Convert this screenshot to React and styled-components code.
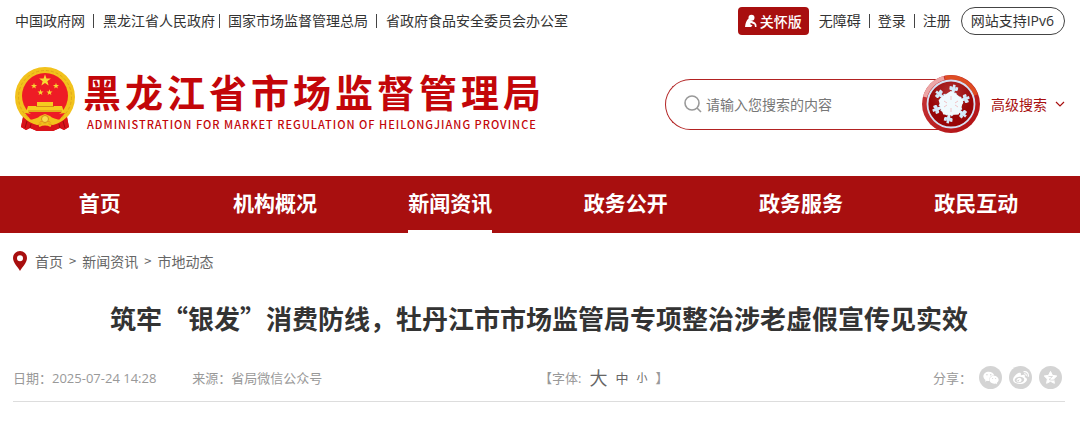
import React from "react";
import styled, { createGlobalStyle } from "styled-components";
import { FaWeixin, FaWeibo } from "react-icons/fa";

const RED = "#a80f0f";
const CJK = `"Noto Sans CJK SC", sans-serif`;
const MIXED = `"Open Sans", "Noto Sans CJK SC", sans-serif`;

const GlobalStyle = createGlobalStyle`
  * { box-sizing: border-box; }
  body { margin: 0; background: #fff; color: #333; font: 14px/20px ${CJK}; }
  a { color: inherit; text-decoration: none; }
  button { font: inherit; color: inherit; background: none; border: 0; padding: 0; cursor: pointer; }
  svg { display: block; flex: none; }
`;

const TopBar = styled.div`
  display: flex;
  justify-content: space-between;
  align-items: center;
  padding: 7px 15px 0;
`;
const LinkRow = styled.nav`
  display: flex;
  align-items: center;
  padding-bottom: 2px;
  white-space: nowrap;
`;
const Bar = styled.i`
  width: 1px;
  height: 14px;
  margin: 2px ${(p) => p.$after ?? 8}px 0 ${(p) => p.$before ?? 8}px;
  background: #444;
`;
const Tools = styled.div`
  display: flex;
  align-items: center;
  gap: 10px;
`;
const CareButton = styled.button`
  display: flex;
  align-items: center;
  justify-content: center;
  gap: 3px;
  height: 28px;
  padding: 0 7px 0 6px;
  border-radius: 4px;
  background: ${RED};
  color: #fff;
  font-weight: 500;
  line-height: 26px;
`;
const Ipv6 = styled.a`
  height: 28px;
  padding: 0 10px 0 9px;
  border: 1px solid #444;
  border-radius: 14px;
  font-family: ${MIXED};
  line-height: 26px;
  white-space: nowrap;
`;

const Header = styled.header`
  display: flex;
  justify-content: space-between;
  padding: 32px 15px 43px;
`;
const Brand = styled.a`
  display: flex;
  gap: 8px;
  color: #c30609;
  white-space: nowrap;
`;
const BrandText = styled.div`
  display: flex;
  flex-direction: column;
`;
const BrandName = styled.div`
  font-size: 38px;
  font-weight: 700;
  line-height: 48px;
  letter-spacing: 4px;
`;
const BrandEnglish = styled.div`
  padding-left: 4px;
  font-size: 11px;
  font-weight: 500;
  line-height: 18px;
  letter-spacing: 1px;
`;
const SearchArea = styled.div`
  display: flex;
  align-items: center;
  height: 58px;
  margin-top: 8px;
`;
const SearchForm = styled.form`
  display: flex;
  align-items: center;
`;
const SearchField = styled.label`
  display: flex;
  align-items: center;
  gap: 3px;
  width: 286px;
  height: 51px;
  padding-left: 17px;
  border: 1px solid #b22222;
  border-right: 0;
  border-radius: 26px 0 0 26px;
  color: #999;
`;
const SearchInput = styled.input`
  width: 200px;
  border: 0;
  outline: 0;
  padding: 0;
  background: none;
  font: inherit;
  color: #333;
  &::placeholder { color: #777; opacity: 1; }
`;
const SearchButton = styled.button`
  margin-left: -29px;
`;
const Advanced = styled.a`
  display: flex;
  align-items: center;
  gap: 8px;
  margin-left: 11px;
  color: ${RED};
  white-space: nowrap;
`;

const MainNav = styled.nav`
  display: grid;
  grid-template-columns: repeat(6, 1fr);
  justify-items: center;
  height: 57px;
  padding: 0 16px 0 12px;
  background: ${RED};
`;
const NavItem = styled.a`
  padding-bottom: 2px;
  border-bottom: 3px solid ${(p) => (p.$active ? "#fff" : "transparent")};
  color: #fff;
  font-size: 21px;
  font-weight: 700;
  line-height: 52px;
`;

const Page = styled.main`
  padding: 0 15px 0 13px;
`;
const Crumbs = styled.nav`
  display: flex;
  align-items: center;
  gap: 6px;
  padding-top: 17px;
  color: #666;
  line-height: 22px;
`;
const Arrow = styled.span`
  font-size: 13px;
`;
const PinBox = styled.span`
  padding-right: 2px;
`;
const Title = styled.h1`
  margin: 26px 0 0;
  color: #333;
  font-size: 26px;
  font-weight: 700;
  line-height: 40px;
  text-align: center;
`;
const Meta = styled.div`
  display: flex;
  align-items: center;
  height: 48px;
  margin-top: 16px;
  border-bottom: 1px solid #ddd;
  color: #999;
  font-family: ${MIXED};
  font-size: 13px;
`;
const Source = styled.div`
  display: flex;
  flex: 0 0 50%;
  gap: 36px;
`;
const SizePicker = styled.div`
  display: flex;
  align-items: center;
  gap: 8px;
`;
const SizeButton = styled.button`
  color: #666;
  font-size: ${(p) => p.$size}px;
`;
const Share = styled.div`
  display: flex;
  align-items: center;
  gap: 7px;
  margin-left: auto;
  padding-right: 3px;
`;
const ShareButton = styled.button`
  display: flex;
  align-items: center;
  justify-content: center;
  width: 23px;
  height: 23px;
  border-radius: 50%;
  background: #d4d4d4;
  color: #fff;
`;

const starPoints = (cx, cy, r, inner = 0.4) =>
  Array.from({ length: 10 }, (_, i) => {
    const a = (Math.PI / 5) * i - Math.PI / 2;
    const d = i % 2 ? r * inner : r;
    return `${cx + d * Math.cos(a)},${cy + d * Math.sin(a)}`;
  }).join(" ");

function Emblem() {
  return (
    <svg width="60" height="64" viewBox="0 0 60 64" aria-hidden="true">
      <path d="M9 45 6 60l5 3 4-2 7 3h16l7-3 4 2 5-3-3-15z" fill="#d9141a" />
      <circle cx="30" cy="30" r="30" fill="#f2c21c" />
      <circle cx="30" cy="30" r="26.5" fill="none" stroke="#dfa51a" strokeWidth="1" strokeDasharray="3 2" />
      <circle cx="30" cy="29" r="23" fill="#ee1c25" />
      <path d="M22 35h16v4h9l2 6H11l2-6h9z" fill="#f5cb1f" />
      <path d="M21 39.500h18M13 44h34" stroke="#d48e16" />
      <path d="M10 46q20 4 40 0l-6 7q-14 3-28 0z" fill="#ee1c25" />
      <g fill="#f8d832">
        <polygon points={starPoints(30, 13.5, 6.2)} />
        <polygon points={starPoints(19, 19, 3.2)} />
        <polygon points={starPoints(41, 19, 3.2)} />
        <polygon points={starPoints(25.5, 25.5, 3.2)} />
        <polygon points={starPoints(34.5, 25.5, 3.2)} />
      </g>
      <path d="M13 53q9-1 12-4l5-2 5 2q3 3 12 4l-4 4q-6 0-9-3l-4 2-4-2q-3 3-9 3z" fill="#f2c21c" />
      <circle cx="30" cy="52" r="3.5" fill="#f8dc4b" stroke="#d48e16" />
      <path d="M8 50q6 6 14 8l8-1 8 1q8-2 14-8l2 10-5 3-4-2-7 3H22l-7-3-4 2-5-3z" fill="#d9141a" />
      <path d="M24 59q6-3 12 0" stroke="#f2c21c" strokeWidth="2" fill="none" />
      <path d="M12 54l-2 7M16 57l-1 4M48 54l2 7M44 57l1 4" stroke="#9d0d10" fill="none" />
    </svg>
  );
}

function Snowflake() {
  return (
    <svg width="58" height="58" viewBox="0 0 58 58" aria-hidden="true">
      <defs>
        <linearGradient id="rim" x1="0" y1="0" x2="1" y2="1">
          <stop offset="0" stopColor="#c93a3c" />
          <stop offset="1" stopColor="#b00d10" />
        </linearGradient>
        <radialGradient id="disc" cx=".5" cy=".25" r=".8">
          <stop offset="0" stopColor="#b03030" />
          <stop offset=".6" stopColor="#980608" />
        </radialGradient>
      </defs>
      <circle cx="29" cy="29" r="29" fill="url(#rim)" />
      <path d="M3 22A27 27 0 0 1 22 3" stroke="#eda6a6" strokeWidth="4" fill="none" />
      <path d="M23 3A27 27 0 0 1 54 20" stroke="#de4d22" strokeWidth="4" fill="none" />
      <circle cx="29" cy="29" r="23.5" fill="url(#disc)" stroke="#d5e2f5" strokeWidth="1.8" />
      <g fill="none">
        {[10, 70, 130, 190, 250, 310].map((a) => (
          <g key={a} transform={`rotate(${a} 29 29)`}>
            <path d="M29 29V12" stroke="#dceffb" strokeWidth="3" />
            <path d="M29 9.500v4M26 11.500v2.500h6v-2.500" stroke="#d3eafa" strokeWidth="2.600" strokeLinejoin="round" />
            <path d="M29 21l-3.500-3.500M29 21l3.500-3.500" stroke="#d3eafa" strokeWidth="2.200" />
          </g>
        ))}
      </g>
      <polygon points={starPoints(29, 29, 13, 0.85)} fill="#f1fafe" />
      <path d="M29 21v4M29 33v4M22 26l3 2M33 30l3 2M22 32l3-2M33 28l3-2" stroke="#f0c4c8" strokeWidth="1" />
    </svg>
  );
}

const CareIcon = () => (
  <svg width="13" height="14" viewBox="0 0 13 14" fill="#fff" aria-hidden="true">
    <circle cx="7.500" cy="3.700" r="3" />
    <path d="M4.500 4.500Q1.500 7 1 13h6l1.500-1.500-2.500-1.500 1-1 3.500 1.500.5 2.500h1.500q.5-3-1.500-4.500L7 6.500z" />
  </svg>
);

const SearchIcon = () => (
  <svg width="20" height="20" viewBox="0 0 20 20" fill="none" stroke="#999" strokeWidth="1.6" aria-hidden="true">
    <circle cx="9" cy="9" r="7" />
    <path d="m14 14 4 4" />
  </svg>
);

const Chevron = () => (
  <svg width="10" height="6" viewBox="0 0 10 6" fill="none" stroke={RED} strokeWidth="1.2" aria-hidden="true">
    <path d="m1 1 4 4 4-4" />
  </svg>
);

const Pin = () => (
  <svg width="14" height="20" viewBox="0 0 14 20" aria-hidden="true">
    <path fillRule="evenodd" d="M7 0a7 7 0 0 0-7 7c0 5 5 9 7 13 2-4 7-8 7-13a7 7 0 0 0-7-7zm0 4.200a3 3 0 1 1 0 6 3 3 0 0 1 0-6z" fill={RED} />
  </svg>
);

const QzoneStar = () => (
  <svg width="15" height="15" viewBox="0 0 15 15" aria-hidden="true">
    <polygon points={starPoints(7.5, 8, 6.6, 0.5)} fill="#fff" stroke="#fff" strokeLinejoin="round" />
    <path d="M5.500 6.500h4L6 9.500q2 1 5 .5" fill="none" stroke="#d4d4d4" strokeWidth=".8" />
  </svg>
);

const navItems = ["首页", "机构概况", "新闻资讯", "政务公开", "政务服务", "政民互动"];

export default function App() {
  return (
    <>
      <GlobalStyle />
      <TopBar>
        <LinkRow>
          <a href="#gov">中国政府网</a>
          <Bar $after={9} />
          <a href="#province">黑龙江省人民政府</a>
          <Bar $before={4} />
          <a href="#samr">国家市场监督管理总局</a>
          <Bar $after={9} />
          <a href="#food">省政府食品安全委员会办公室</a>
        </LinkRow>
        <Tools>
          <CareButton type="button"><CareIcon />关怀版</CareButton>
          <LinkRow>
            <a href="#access">无障碍</a>
            <Bar />
            <a href="#login">登录</a>
            <Bar />
            <a href="#register">注册</a>
          </LinkRow>
          <Ipv6 href="#ipv6">网站支持IPv6</Ipv6>
        </Tools>
      </TopBar>
      <Header>
        <Brand href="#home">
          <Emblem />
          <BrandText>
            <BrandName>黑龙江省市场监督管理局</BrandName>
            <BrandEnglish>ADMINISTRATION FOR MARKET REGULATION OF HEILONGJIANG PROVINCE</BrandEnglish>
          </BrandText>
        </Brand>
        <SearchArea>
          <SearchForm>
            <SearchField>
              <SearchIcon />
              <SearchInput type="text" placeholder="请输入您搜索的内容" aria-label="搜索" />
            </SearchField>
            <SearchButton type="button" aria-label="搜索"><Snowflake /></SearchButton>
          </SearchForm>
          <Advanced href="#advanced">高级搜索<Chevron /></Advanced>
        </SearchArea>
      </Header>
      <MainNav>
        {navItems.map((t) => (
          <NavItem key={t} href={`#${t}`} $active={t === "新闻资讯"}>{t}</NavItem>
        ))}
      </MainNav>
      <Page>
        <Crumbs>
          <PinBox><Pin /></PinBox>
          <a href="#home">首页</a>
          <Arrow>&gt;</Arrow>
          <a href="#news">新闻资讯</a>
          <Arrow>&gt;</Arrow>
          <a href="#city">市地动态</a>
        </Crumbs>
        <Title>筑牢“银发”消费防线，牡丹江市市场监管局专项整治涉老虚假宣传见实效</Title>
        <Meta>
          <Source>
            <span>日期：2025-07-24 14:28</span>
            <span>来源：省局微信公众号</span>
          </Source>
          <SizePicker>
            <span>【字体:</span>
            <SizeButton type="button" $size={18}>大</SizeButton>
            <SizeButton type="button" $size={13}>中</SizeButton>
            <SizeButton type="button" $size={11}>小</SizeButton>
            <span>】</span>
          </SizePicker>
          <Share>
            <span>分享：</span>
            <ShareButton type="button" aria-label="微信"><FaWeixin size={16} /></ShareButton>
            <ShareButton type="button" aria-label="微博"><FaWeibo size={16} /></ShareButton>
            <ShareButton type="button" aria-label="QQ空间"><QzoneStar /></ShareButton>
          </Share>
        </Meta>
      </Page>
    </>
  );
}
